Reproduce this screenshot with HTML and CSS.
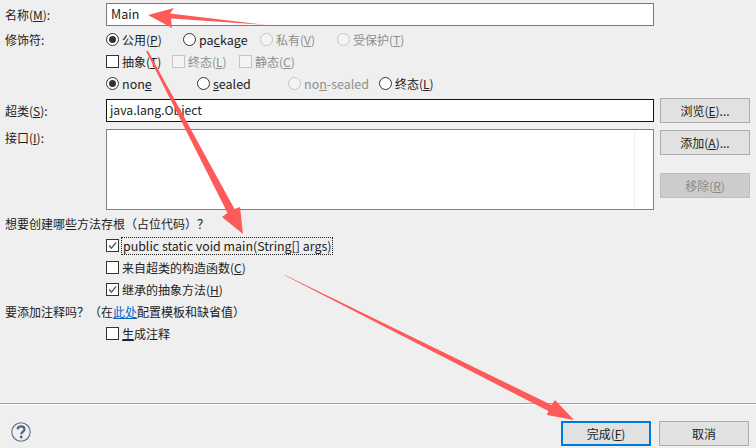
FILE: index.html
```html
<!DOCTYPE html>
<html lang="zh">
<head>
<meta charset="utf-8">
<title>新建类</title>
<link rel="stylesheet" href="styles.css">
</head>
<body>
<div class="dialog">
  <main class="form">
    <div class="row row-name">
      <label class="label">名称(<u>M</u>):</label>
      <div class="input input-muted">Main</div>
    </div>
    <div class="row">
      <span class="label">修饰符:</span>
      <div class="options cols-77">
        <span class="opt"><i class="radio on"></i><span>公用(<u>P</u>)</span></span>
        <span class="opt"><i class="radio"></i><span class="latin">pa<u>c</u>kage</span></span>
        <span class="opt off"><i class="radio"></i><span>私有(<u>V</u>)</span></span>
        <span class="opt off"><i class="radio"></i><span>受保护(<u>T</u>)</span></span>
      </div>
    </div>
    <div class="row">
      <span class="label"></span>
      <div class="options cols-66">
        <span class="opt"><i class="box"></i><span>抽象(<u>T</u>)</span></span>
        <span class="opt off"><i class="box"></i><span>终态(<u>L</u>)</span></span>
        <span class="opt off"><i class="box"></i><span>静态(<u>C</u>)</span></span>
      </div>
    </div>
    <div class="row">
      <span class="label"></span>
      <div class="options cols-91">
        <span class="opt"><i class="radio on"></i><span class="latin">non<u>e</u></span></span>
        <span class="opt"><i class="radio"></i><span class="latin"><u>s</u>ealed</span></span>
        <span class="opt off"><i class="radio"></i><span class="latin">no<u>n</u>-sealed</span></span>
        <span class="opt"><i class="radio"></i><span>终态(<u>L</u>)</span></span>
      </div>
    </div>
    <div class="row row-super">
      <label class="label">超类(<u>S</u>):</label>
      <div class="input input-focus">java.lang.Object</div>
      <button class="btn btn-side">浏览(<u>E</u>)...</button>
    </div>
    <div class="row row-list">
      <label class="label label-top">接口(<u>I</u>):</label>
      <div class="list"><span class="list-rule"></span></div>
      <div class="side">
        <button class="btn btn-side">添加(<u>A</u>)...</button>
        <button class="btn btn-side btn-off">移除(<u>R</u>)</button>
      </div>
    </div>
    <div class="line line-first"><span>想要创建哪些方法存根（占位代码）？</span></div>
    <div class="line line-indent">
      <span class="opt"><i class="box"><svg viewBox="0 0 13 13"><path d="M2.500 6.500 5.300 9.600 10.800 2.800"/></svg></i><span class="focus">public static void main(String[] args)</span></span>
    </div>
    <div class="line line-indent">
      <span class="opt"><i class="box"></i><span>来自超类的构造函数(<u>C</u>)</span></span>
    </div>
    <div class="line line-indent">
      <span class="opt"><i class="box"><svg viewBox="0 0 13 13"><path d="M2.500 6.500 5.300 9.600 10.800 2.800"/></svg></i><span>继承的抽象方法(<u>H</u>)</span></span>
    </div>
    <div class="line"><span>要添加注释吗？（在<a class="link" href="#">此处</a>配置模板和缺省值）</span></div>
    <div class="line line-indent">
      <span class="opt"><i class="box"></i><span><u>生</u>成注释</span></span>
    </div>
  </main>
  <footer class="footer">
    <svg class="help" viewBox="0 0 20 20">
      <circle cx="10" cy="10" r="9.200"/>
      <path class="q" d="M6.600 7.400C6.800 5.200 8.300 4.300 10.100 4.300 12.100 4.300 13.500 5.500 13.500 7.200 13.500 9.600 10.300 9.700 10.300 12.300"/>
      <circle class="dot" cx="10.200" cy="15" r="1.400"/>
    </svg>
    <div class="actions">
      <button class="btn btn-primary">完成(<u>F</u>)</button>
      <button class="btn">取消</button>
    </div>
  </footer>
  <svg class="arrows" viewBox="0 0 756 448">
    <polygon points="148,15 174,8 170,13.500 267,25 171,18.500 172,28"/>
    <polygon points="146,51 148,51 234.500,209 240,207 243,234 222,217 227.500,213"/>
    <polygon points="284,275 285,275 551.600,404.900 555,400 574,420 547,415 548.400,411.100"/>
  </svg>
</div>
</body>
</html>
```
FILE: styles.css
```css
* { box-sizing: border-box; }
html, body { margin: 0; padding: 0; }
body {
  width: 756px;
  height: 448px;
  overflow: hidden;
  background: #efefef;
  color: #222;
  font-family: "Noto Sans CJK SC", "Noto Sans", sans-serif;
  font-size: 12px;
}
.dialog {
  position: relative;
  width: 756px;
  height: 448px;
  display: flex;
  flex-direction: column;
}
.form {
  flex: 1;
  padding: 3px 0 0 5px;
}
.row {
  display: grid;
  grid-template-columns: 101px 548px 96px;
  align-items: center;
  height: 22px;
}
.row-name { height: 23px; margin-bottom: 3px; }
.row-super { height: 25px; margin-top: 3px; }
.row-list { height: 81px; margin-top: 6px; align-items: start; }
.label { padding-bottom: 1px; }
.label-top { padding-top: 0; }
.input {
  height: 23px;
  padding: 0 4px;
  line-height: 20px;
  background: #fff;
  font-size: 12.500px;
}
.input-muted { border: 1px solid #7a7a7a; }
.input-focus { border: 1px solid #111; padding-left: 3px; font-size: 12.200px; }
.list {
  position: relative;
  height: 81px;
  background: #fff;
  border: 1px solid #828282;
}
.list-rule {
  position: absolute;
  top: 1px;
  bottom: 1px;
  right: 18px;
  width: 1px;
  background: #e8eefa;
}
.side {
  display: flex;
  flex-direction: column;
  gap: 18px;
  padding-top: 1px;
}
.options { display: grid; align-items: center; padding-bottom: 1px; }
.cols-77 { grid-template-columns: repeat(4, 77px); }
.cols-66 { grid-template-columns: 66px 67px 67px; }
.cols-91 { grid-template-columns: repeat(4, 91px); }
.opt {
  display: inline-flex;
  align-items: center;
  gap: 3px;
  white-space: nowrap;
}
.latin { font-size: 12.500px; }
.off { color: #8e8e8e; }
.radio, .box {
  display: block;
  flex: none;
  width: 13px;
  height: 13px;
  background: #fff;
  border: 1px solid #333;
}
.radio { border-radius: 50%; position: relative; }
.radio.on::after {
  content: "";
  position: absolute;
  left: 2px;
  top: 2px;
  width: 7px;
  height: 7px;
  border-radius: 50%;
  background: #333;
}
.off .radio, .off .box { border-color: #c4c4c4; background: #f4f4f4; }
.box svg { display: block; width: 11px; height: 11px; }
.box path { fill: none; stroke: #555; stroke-width: 1.600; }
.focus {
  margin-left: -1px;
  padding: 0 1px;
  border: 1px dotted #222;
  line-height: 16px;
  font-size: 12.400px;
}
.line {
  display: flex;
  align-items: center;
  height: 22px;
  padding-bottom: 1px;
  white-space: pre;
}
.line-first { margin-top: 3px; }
.line-indent { padding-left: 101px; }
.link { color: #0a66c8; }
.btn {
  display: block;
  width: 90px;
  height: 25px;
  padding: 0;
  background: #e1e1e1;
  border: 1px solid #adadad;
  color: #222;
  font: inherit;
}
.btn-side { margin-left: 6px; }
.btn-off { background: #ccc; border-color: #bfbfbf; color: #8a8a8a; }
.footer {
  position: relative;
  height: 45px;
  border-top: 1px solid #a0a0a0;
  box-shadow: inset 0 1px 0 #fff;
  display: flex;
  align-items: flex-start;
  justify-content: space-between;
  padding: 17px 7px 0 11px;
}
.help { display: block; width: 20px; height: 20px; margin-top: 1px; }
.help circle { fill: none; stroke: #5a6f93; stroke-width: 1.100; }
.help .q { fill: none; stroke: #4f6287; stroke-width: 2.200; }
.help .dot { fill: #4f6287; stroke: none; }
.actions { display: flex; gap: 8px; }
.btn-primary { border: 2px solid #0078d7; }
.arrows {
  position: absolute;
  left: 0;
  top: 0;
  width: 756px;
  height: 448px;
  pointer-events: none;
}
.arrows polygon { fill: #fd5a5a; }
```
